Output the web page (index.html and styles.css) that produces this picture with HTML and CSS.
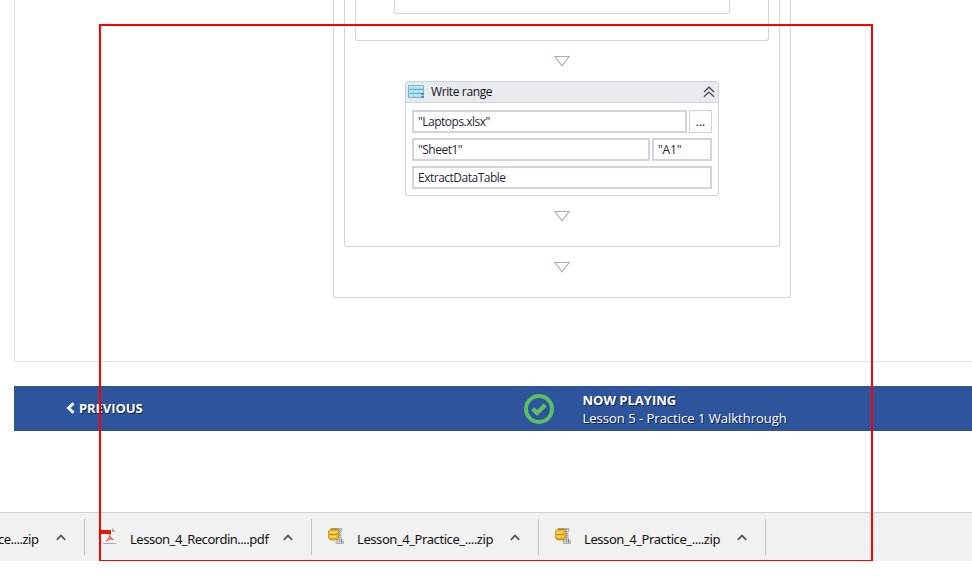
FILE: index.html
```html
<!DOCTYPE html>
<html lang="en">
<head>
<meta charset="utf-8">
<title>Lesson 5 - Practice 1 Walkthrough</title>
<link rel="stylesheet" href="styles.css">
</head>
<body>
<svg width="0" height="0" class="defs" aria-hidden="true">
  <symbol id="arrow" viewBox="0 0 16 11"><path d="M.8 .5H15.2L8 9.8Z" fill="#fcfdfe" stroke="#a5abb8" stroke-width="1.1"/></symbol>
  <symbol id="up" viewBox="0 0 10 7"><path d="M.8 5.8 5 1.6 9.2 5.8" fill="none" stroke="#555" stroke-width="1.8"/></symbol>
  <symbol id="zip" viewBox="0 0 16 16">
    <path d="M10 .5H14V3L13 4V10L15.5 13V15.5H8V13L10 11Z" fill="#c9cccf" stroke="#a6a9ac" stroke-width=".8"/>
    <path d="M11.5 1V15" stroke="#85888b" stroke-dasharray="1 1"/>
    <path d="M13.5 11V15" stroke="#888"/>
    <path d="M2 1.5 4 .4H9.5L10.5 2V10L9 12H2L.5 10V3Z" fill="#eeb51e" stroke="#bd8d27" stroke-width=".7"/>
    <path d="M3 1.2H10" stroke="#85745c"/>
    <path d="M2 4.5H8M2 8.5H8" stroke="#ffe477" stroke-width="1.3"/>
    <path d="M1 6.5H9.5M1 11H9" stroke="#d08d1c"/>
  </symbol>
</svg>
<main class="page">
  <section class="panel">
    <div class="sequence outer">
      <div class="sequence body">
        <div class="sequence nested"><div class="sequence leaf"></div></div>
        <svg class="arrow"><use href="#arrow"/></svg>
        <article class="activity">
          <header class="activity-head">
            <svg class="sheet" viewBox="0 0 17 14"><path d="M.5 .5H15.5V12.5H.5Z" fill="#a8ddf3" stroke="#7fb8d4"/><path d="M1 4.5H15M1 8.5H15" stroke="#62a9cc"/><path d="M1 2H15M1 6H15M1 10H15" stroke="#c9effc"/><path d="M5.5 1V12" stroke="#83c8e4" stroke-width=".7"/><path d="M14.5 8V13" stroke="#4f7896" stroke-width="2" stroke-dasharray="2 1"/></svg>
            <span>Write range</span>
            <svg class="collapse" viewBox="0 0 12 12"><path d="M1 6 6 1.2 11 6M1 10.8 6 6 11 10.8" fill="none" stroke="#41444f" stroke-width="1.2"/></svg>
          </header>
          <div class="fields">
            <div class="row"><div class="field">"Laptops.xlsx"</div><div class="browse">...</div></div>
            <div class="row"><div class="field">"Sheet1"</div><div class="field cell">"A1"</div></div>
            <div class="row"><div class="field">ExtractDataTable</div></div>
          </div>
        </article>
        <svg class="arrow"><use href="#arrow"/></svg>
      </div>
      <svg class="arrow"><use href="#arrow"/></svg>
    </div>
  </section>
  <nav class="lesson-bar">
    <div class="previous"><svg class="back" viewBox="0 0 9 12"><path d="M7.5 1.3 2.5 6 7.5 10.7" fill="none" stroke="#fff" stroke-width="2.8"/></svg><span>PREVIOUS</span></div>
    <svg class="check" viewBox="0 0 30 30"><circle cx="15" cy="15" r="13" fill="none" stroke="#5cbf60" stroke-width="4"/><path d="M8.7 14.8 13 19 21.3 11" fill="none" stroke="#5cbf60" stroke-width="4.4"/></svg>
    <div class="playing"><b>NOW PLAYING</b><span class="lesson">Lesson 5 - Practice 1 Walkthrough</span></div>
  </nav>
  <footer class="downloads">
    <div class="item first"><span class="name tail">ce....zip</span><svg class="up"><use href="#up"/></svg></div>
    <div class="item"><svg class="file" viewBox="0 0 16 16"><path d="M2 0H11L15 4V15.5H2Z" fill="#f4f4f4"/><path d="M11 0V4H15Z" fill="#aaa"/><path d="M2 15.5H15" stroke="#aaa"/><path d="M0 2H10V6H0Z" fill="#e51c05"/><path d="M8.7 6C9.3 9 7 12 5 13 7 11 10 10.7 12.6 11.6 10.5 11.5 8.5 9 8.7 6" fill="none" stroke="#ec5448" stroke-width="1.1"/></svg><span class="name pdf">Lesson_4_Recordin....pdf</span><svg class="up"><use href="#up"/></svg></div>
    <div class="item"><svg class="file"><use href="#zip"/></svg><span class="name zip">Lesson_4_Practice_....zip</span><svg class="up"><use href="#up"/></svg></div>
    <div class="item"><svg class="file"><use href="#zip"/></svg><span class="name zip">Lesson_4_Practice_....zip</span><svg class="up"><use href="#up"/></svg></div>
  </footer>
  <div class="highlight"></div>
</main>
</body>
</html>
```
FILE: styles.css
```css
* { box-sizing: border-box; }
body { margin: 0; background: #fff; font-family: "Open Sans", "Noto Sans", sans-serif; }
svg { display: block; flex-shrink: 0; }
.defs { position: absolute; }
.page { position: relative; width: 972px; height: 561px; overflow: hidden; }
.panel { height: 362px; margin-left: 14px; padding-left: 318px; border: solid #e2e2e2; border-width: 0 0 1px 1px; }
.sequence { display: flex; flex-direction: column; align-items: center; border: 1px solid #d2d5da; border-top: 0; border-radius: 0 0 3px 3px; }
.outer { width: 458px; height: 298px; }
.body { width: 436px; height: 247px; }
.nested { width: 414px; height: 41px; }
.leaf { width: 336px; height: 14px; }
.arrow { width: 16px; height: 11px; margin-top: 15px; }
.activity { width: 314px; height: 115px; margin-top: 14px; border: 1px solid #cfd3da; border-radius: 2px; }
.activity-head { display: flex; align-items: center; height: 21px; padding: 0 3px 0 2px; background: #e7eaee; border-bottom: 1px solid #d0d4da; color: #111; font-size: 12px; line-height: 18px; }
.activity-head span { margin: -1px 0 0 6px; letter-spacing: -.38px; }
.sheet { width: 17px; height: 14px; }
.collapse { width: 12px; height: 12px; margin-left: auto; }
.fields { display: flex; flex-direction: column; gap: 5px; padding: 7px 6px; }
.row { display: flex; gap: 2px; height: 23px; }
.field { flex: 1; padding-left: 4px; border: 2px solid #d0d4df; color: #26283a; font-size: 12px; line-height: 19px; letter-spacing: -.5px; white-space: nowrap; }
.cell { flex: 0 0 60px; letter-spacing: -.2px; }
.browse { width: 23px; border: 1px solid #d0d4df; color: #111; font-size: 12px; line-height: 21px; text-align: center; }
.lesson-bar { display: flex; align-items: center; height: 45px; margin: 24px 0 0 14px; background: #2e559b; color: #fff; font-size: 13px; line-height: 18px; text-shadow: 1px 1px 0 #10234b; }
.previous { display: flex; align-items: center; width: 458px; margin: -2px 0 0 52px; font-weight: 700; letter-spacing: -.08px; }
.back { width: 9px; height: 12px; margin-right: 4px; }
.check { width: 30px; height: 30px; }
.playing { display: flex; flex-direction: column; margin-left: 28.5px; padding-top: 1px; }
.downloads { display: flex; height: 49px; margin-top: 81px; padding-top: 6px; background: #f1f1f1; border-top: 1px solid #d0d0d0; font-family: "Noto Sans", "Open Sans", sans-serif; }
.item { display: flex; width: 227px; height: 36px; padding-left: 16px; border-right: 1px solid #c5c5c5; }
.first { width: 85px; padding: 0; }
.file { width: 16px; height: 16px; margin: 9px 13px 0 0; }
.name { width: 153px; padding-top: 10px; color: #111; font-size: 13px; line-height: 20px; white-space: nowrap; }
.pdf { letter-spacing: -.48px; }
.zip { letter-spacing: -.43px; }
.tail { width: 56px; text-indent: -2px; letter-spacing: -.5px; }
.up { width: 10px; height: 7px; margin-top: 15px; }
.highlight { position: absolute; left: 99px; top: 24px; width: 774px; height: 537px; border: 2px solid #f00; border-bottom-width: 1px; }
```
